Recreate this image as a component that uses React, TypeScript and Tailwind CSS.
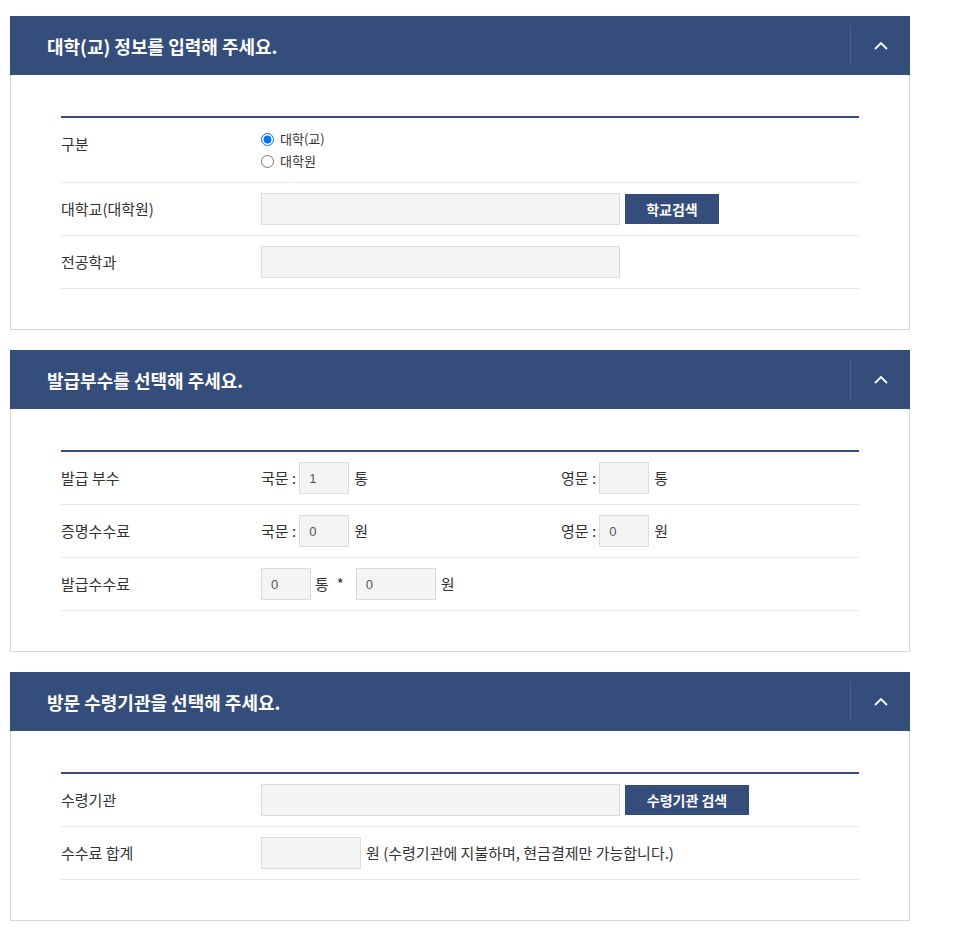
import { ReactNode } from "react";

const NAVY = "bg-[#354d7a]";

function Section({ title, children }: { title: string; children: ReactNode }) {
  return (
    <section>
      <div className={`h-[59px] ${NAVY} flex items-center`}>
        <h2 className="flex-1 pl-[37px] text-white text-[18px] font-bold leading-[24px]">{title}</h2>
        <button className="w-[60px] h-[40px] border-l border-[#4a6290] flex items-center justify-center">
          <svg width="14" height="9" viewBox="0 0 14 9" fill="none">
            <polyline points="1,8 7,2 13,8" stroke="#ffffff" strokeWidth="1.8" />
          </svg>
        </button>
      </div>
      <div className="border border-t-0 border-[#d6d6d6] px-[50px] pt-[41px] pb-[40px]">
        <div className="border-t-2 border-[#354d7a]">{children}</div>
      </div>
    </section>
  );
}

function Row({ label, children, cols = "grid-cols-[200px_1fr]" }: { label: string; children: ReactNode; cols?: string }) {
  return (
    <div className={`grid ${cols} py-[10px] border-b border-[#e9e9e9]`}>
      <div className="text-[15px] leading-[32px] text-[#333]">{label}</div>
      {children}
    </div>
  );
}

function Field({ w, value = "" }: { w: string; value?: string }) {
  return (
    <input
      readOnly
      value={value}
      className={`${w} h-[32px] bg-[#f4f4f4] border border-[#dcdcdc] pl-[9px] text-[13px] text-[#555] font-['Liberation_Sans',sans-serif] outline-none`}
    />
  );
}

function NavyButton({ children, w }: { children: ReactNode; w: string }) {
  return (
    <button className={`${w} h-[30px] ml-[5px] ${NAVY} text-white text-[14px] font-bold`}>{children}</button>
  );
}

function Pair({ prefix, value, unit }: { prefix: string; value: string; unit: string }) {
  return (
    <div className="flex items-center text-[15px] text-[#333]">
      <span className="mr-[3px]">{prefix}</span>
      <Field w="w-[50px]" value={value} />
      <span className="ml-[5px]">{unit}</span>
    </div>
  );
}

export default function App() {
  return (
    <div className="min-h-screen bg-white pt-4 pl-[10px] font-['Noto_Sans_CJK_KR','Noto_Sans',sans-serif] text-[#333]">
      <div className="w-[900px] flex flex-col gap-5">
        <Section title="대학(교) 정보를 입력해 주세요.">
          <div className="grid grid-cols-[200px_1fr] py-[10px] border-b border-[#e9e9e9]">
            <div className="text-[15px] leading-[32px] text-[#333]">구분</div>
            <div className="flex flex-col text-[13px] text-[#333]">
              <label className="h-[22px] flex items-center gap-[6px]">
                <input type="radio" name="gubun" defaultChecked className="m-0 w-[13px] h-[13px]" />
                대학(교)
              </label>
              <label className="h-[22px] flex items-center gap-[6px]">
                <input type="radio" name="gubun" className="m-0 w-[13px] h-[13px]" />
                대학원
              </label>
            </div>
          </div>
          <Row label="대학교(대학원)">
            <div className="flex items-center">
              <Field w="w-[359px]" />
              <NavyButton w="w-[94px]">학교검색</NavyButton>
            </div>
          </Row>
          <Row label="전공학과">
            <div className="flex items-center">
              <Field w="w-[359px]" />
            </div>
          </Row>
        </Section>

        <Section title="발급부수를 선택해 주세요.">
          <Row label="발급 부수" cols="grid-cols-[200px_300px_1fr]">
            <Pair prefix="국문 :" value="1" unit="통" />
            <Pair prefix="영문 :" value="" unit="통" />
          </Row>
          <Row label="증명수수료" cols="grid-cols-[200px_300px_1fr]">
            <Pair prefix="국문 :" value="0" unit="원" />
            <Pair prefix="영문 :" value="0" unit="원" />
          </Row>
          <Row label="발급수수료">
            <div className="flex items-center text-[15px] text-[#333]">
              <Field w="w-[50px]" value="0" />
              <span className="ml-[4px]">통</span>
              <span className="ml-[8px]">*</span>
              <span className="ml-[12px] flex">
                <Field w="w-[80px]" value="0" />
              </span>
              <span className="ml-[5px]">원</span>
            </div>
          </Row>
        </Section>

        <Section title="방문 수령기관을 선택해 주세요.">
          <Row label="수령기관">
            <div className="flex items-center">
              <Field w="w-[359px]" />
              <NavyButton w="w-[124px]">수령기관 검색</NavyButton>
            </div>
          </Row>
          <Row label="수수료 합계">
            <div className="flex items-center text-[15px] text-[#333]">
              <Field w="w-[100px]" />
              <span className="ml-[5px]">원 (수령기관에 지불하며, 현금결제만 가능합니다.)</span>
            </div>
          </Row>
        </Section>
      </div>
    </div>
  );
}
